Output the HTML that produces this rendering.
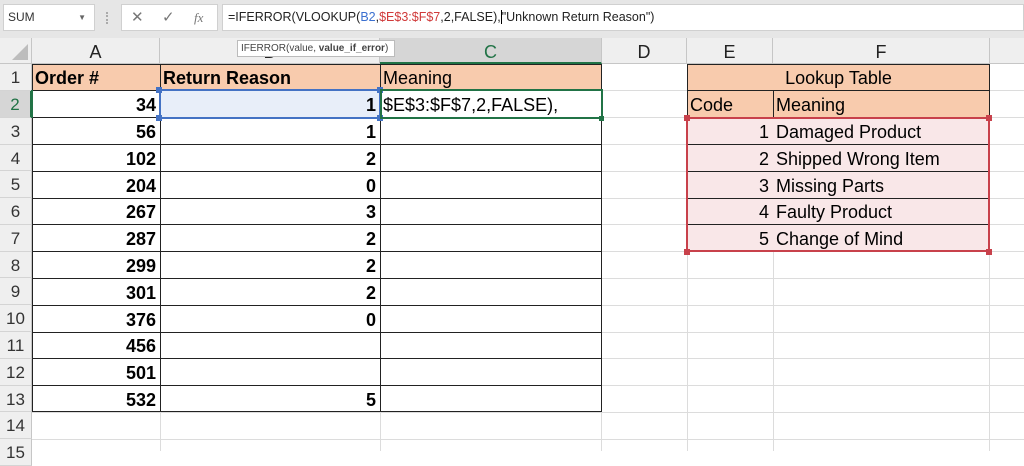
<!DOCTYPE html>
<html><head><meta charset="utf-8"><style>
*{margin:0;padding:0;box-sizing:border-box}
body{width:1024px;height:451px;overflow:hidden;background:#fff;position:relative;font-family:"Liberation Sans",sans-serif}
.a{position:absolute}
.c{position:absolute;font-size:18px;line-height:28px;white-space:nowrap;overflow:hidden;color:#000}
.r{text-align:right;padding-right:4px}
.l{padding-left:3px}
.b{font-weight:bold}
.rh{position:absolute;left:0;width:32px;text-align:center;font-size:17px;color:#333;background:#efefef;border-bottom:1px solid #d4d4d4;border-right:1px solid #c6c6c6;line-height:27px}
.ch{position:absolute;top:38px;height:26px;text-align:center;font-size:18px;line-height:28px;color:#222;background:#efefef;border-right:1px solid #c6c6c6;border-bottom:1px solid #c6c6c6}
.gh{position:absolute;left:32px;right:0;height:1px;background:#dcdcdc}
.gv{position:absolute;top:64px;bottom:0;width:1px;background:#dcdcdc}
</style></head><body>
<div class="a" style="left:0;top:0;width:1024px;height:38px;background:#e6e6e6"></div>
<div class="a" style="left:3px;top:4px;width:92px;height:27px;background:#fff;border:1px solid #d0d0d0;font-size:12px;line-height:25px;padding-left:4px;color:#333">SUM<span style="position:absolute;right:8px;top:0;font-size:8px;color:#666">▼</span></div>
<div class="a" style="left:106px;top:12px;width:2px;height:12px;border-left:2px dotted #aaa"></div>
<div class="a" style="left:121px;top:4px;width:97px;height:27px;background:#fff;border:1px solid #d0d0d0;color:#777;font-size:15px;line-height:25px">
<span class="a" style="left:9px">✕</span><span class="a" style="left:40px">✓</span><span class="a" style="left:72px;font-family:'Liberation Serif',serif;font-style:italic;font-size:13px">fx</span></div>
<div class="a" style="left:222px;top:4px;width:802px;height:27px;background:#fff;border:1px solid #d0d0d0;font-size:12.5px;line-height:25px;padding-left:5px;color:#222">=IFERROR(VLOOKUP(<span style="color:#3a6fd0">B2</span>,<span style="color:#d03a3a">$E$3:$F$7</span>,2,FALSE),<span style="border-left:1px solid #000"></span>"Unknown Return Reason")</div>
<div class="a" style="left:0;top:38px;width:32px;height:26px;background:#efefef;border-right:1px solid #c6c6c6;border-bottom:1px solid #c6c6c6"></div>
<div class="a" style="left:12px;top:44px;width:0;height:0;border-left:16px solid transparent;border-bottom:16px solid #bdbdbd"></div>
<div class="ch" style="left:32px;width:128px">A</div>
<div class="ch" style="left:160px;width:220px">B</div>
<div class="ch" style="left:380px;width:222px;background:#d6d6d6;color:#217346;border-bottom:2px solid #217346">C</div>
<div class="ch" style="left:602px;width:85px">D</div>
<div class="ch" style="left:687px;width:86px">E</div>
<div class="ch" style="left:773px;width:217px">F</div>
<div class="ch" style="left:990px;width:40px"></div>
<div class="a" style="left:237px;top:40px;width:158px;height:17px;background:#fff;border:1px solid #bbb;font-size:10px;line-height:15px;padding-left:3px;color:#444;white-space:nowrap">IFERROR(value, <b>value_if_error</b>)</div>
<div class="gv" style="left:160px"></div><div class="gv" style="left:380px"></div><div class="gv" style="left:601px"></div><div class="gv" style="left:687px"></div><div class="gv" style="left:773px"></div><div class="gv" style="left:989px"></div>
<div class="gh" style="top:90px"></div><div class="gh" style="top:117px"></div><div class="gh" style="top:144px"></div><div class="gh" style="top:171px"></div><div class="gh" style="top:198px"></div><div class="gh" style="top:224px"></div><div class="gh" style="top:251px"></div><div class="gh" style="top:278px"></div><div class="gh" style="top:305px"></div><div class="gh" style="top:332px"></div><div class="gh" style="top:358px"></div><div class="gh" style="top:385px"></div><div class="gh" style="top:412px"></div><div class="gh" style="top:439px"></div>
<div class="rh" style="top:64px;height:27px">1</div>
<div class="rh" style="top:91px;height:27px;background:#d6d6d6;color:#217346;border-right:2px solid #217346">2</div>
<div class="rh" style="top:118px;height:27px">3</div>
<div class="rh" style="top:145px;height:26px">4</div>
<div class="rh" style="top:171px;height:27px">5</div>
<div class="rh" style="top:198px;height:27px">6</div>
<div class="rh" style="top:225px;height:27px">7</div>
<div class="rh" style="top:252px;height:26px">8</div>
<div class="rh" style="top:278px;height:27px">9</div>
<div class="rh" style="top:305px;height:27px">10</div>
<div class="rh" style="top:332px;height:27px">11</div>
<div class="rh" style="top:359px;height:27px">12</div>
<div class="rh" style="top:386px;height:26px">13</div>
<div class="rh" style="top:412px;height:27px">14</div>
<div class="rh" style="top:439px;height:27px">15</div>
<div class="a" style="left:32px;top:64px;width:570px;height:26px;background:#f8cbad"></div>
<div class="a" style="left:161px;top:91px;width:219px;height:26px;background:#e8eef9"></div>
<div class="a" style="left:32px;top:64px;width:570px;height:348px;border:1px solid #222"></div>
<div class="a" style="left:160px;top:64px;width:1px;height:348px;background:#222"></div>
<div class="a" style="left:380px;top:64px;width:1px;height:348px;background:#222"></div>
<div class="a" style="left:32px;top:117px;width:570px;height:1px;background:#222"></div>
<div class="a" style="left:32px;top:144px;width:570px;height:1px;background:#222"></div>
<div class="a" style="left:32px;top:171px;width:570px;height:1px;background:#222"></div>
<div class="a" style="left:32px;top:198px;width:570px;height:1px;background:#222"></div>
<div class="a" style="left:32px;top:224px;width:570px;height:1px;background:#222"></div>
<div class="a" style="left:32px;top:251px;width:570px;height:1px;background:#222"></div>
<div class="a" style="left:32px;top:278px;width:570px;height:1px;background:#222"></div>
<div class="a" style="left:32px;top:305px;width:570px;height:1px;background:#222"></div>
<div class="a" style="left:32px;top:332px;width:570px;height:1px;background:#222"></div>
<div class="a" style="left:32px;top:358px;width:570px;height:1px;background:#222"></div>
<div class="a" style="left:32px;top:385px;width:570px;height:1px;background:#222"></div>
<div class="a" style="left:32px;top:90px;width:570px;height:1px;background:#222"></div>
<div class="c b l" style="left:32px;top:64px;width:128px">Order #</div>
<div class="c b l" style="left:160px;top:64px;width:220px">Return Reason</div>
<div class="c l" style="left:380px;top:64px;width:222px">Meaning</div>
<div class="c b r" style="left:32px;top:91px;width:128px">34</div>
<div class="c b r" style="left:32px;top:118px;width:128px">56</div>
<div class="c b r" style="left:32px;top:145px;width:128px">102</div>
<div class="c b r" style="left:32px;top:172px;width:128px">204</div>
<div class="c b r" style="left:32px;top:198px;width:128px">267</div>
<div class="c b r" style="left:32px;top:225px;width:128px">287</div>
<div class="c b r" style="left:32px;top:252px;width:128px">299</div>
<div class="c b r" style="left:32px;top:279px;width:128px">301</div>
<div class="c b r" style="left:32px;top:306px;width:128px">376</div>
<div class="c b r" style="left:32px;top:332px;width:128px">456</div>
<div class="c b r" style="left:32px;top:359px;width:128px">501</div>
<div class="c b r" style="left:32px;top:386px;width:128px">532</div>
<div class="c b r" style="left:160px;top:91px;width:220px">1</div>
<div class="c b r" style="left:160px;top:118px;width:220px">1</div>
<div class="c b r" style="left:160px;top:145px;width:220px">2</div>
<div class="c b r" style="left:160px;top:172px;width:220px">0</div>
<div class="c b r" style="left:160px;top:198px;width:220px">3</div>
<div class="c b r" style="left:160px;top:225px;width:220px">2</div>
<div class="c b r" style="left:160px;top:252px;width:220px">2</div>
<div class="c b r" style="left:160px;top:279px;width:220px">2</div>
<div class="c b r" style="left:160px;top:306px;width:220px">0</div>
<div class="c b r" style="left:160px;top:386px;width:220px">5</div>
<div class="c l" style="left:380px;top:91px;width:222px">$E$3:$F$7,2,FALSE),</div>
<div class="a" style="left:159px;top:89px;width:222px;height:30px;border:2px solid #4472c4"></div>
<div class="a" style="left:156px;top:87px;width:6px;height:6px;background:#4472c4"></div>
<div class="a" style="left:377px;top:87px;width:6px;height:6px;background:#4472c4"></div>
<div class="a" style="left:156px;top:115px;width:6px;height:6px;background:#4472c4"></div>
<div class="a" style="left:377px;top:115px;width:6px;height:6px;background:#4472c4"></div>
<div class="a" style="left:31px;top:90px;width:2px;height:28px;background:#217346"></div>
<div class="a" style="left:380px;top:89px;width:223px;height:30px;border:2px solid #217346"></div>
<div class="a" style="left:599px;top:116px;width:5px;height:5px;background:#217346"></div>
<div class="a" style="left:687px;top:64px;width:303px;height:54px;background:#f8cbad;border:1px solid #222"></div>
<div class="a" style="left:687px;top:90px;width:303px;height:1px;background:#222"></div>
<div class="a" style="left:773px;top:91px;width:1px;height:160px;background:#222"></div>
<div class="a" style="left:687px;top:118px;width:303px;height:134px;background:#f9e7e8"></div>
<div class="a" style="left:687px;top:144px;width:303px;height:1px;background:#222"></div>
<div class="a" style="left:687px;top:171px;width:303px;height:1px;background:#222"></div>
<div class="a" style="left:687px;top:198px;width:303px;height:1px;background:#222"></div>
<div class="a" style="left:687px;top:224px;width:303px;height:1px;background:#222"></div>
<div class="a" style="left:686px;top:117px;width:304px;height:135px;border:2px solid #c8414b"></div>
<div class="a" style="left:684px;top:115px;width:6px;height:6px;background:#c8414b"></div>
<div class="a" style="left:986px;top:115px;width:6px;height:6px;background:#c8414b"></div>
<div class="a" style="left:684px;top:249px;width:6px;height:6px;background:#c8414b"></div>
<div class="a" style="left:986px;top:249px;width:6px;height:6px;background:#c8414b"></div>
<div class="c" style="left:687px;top:64px;width:303px;text-align:center">Lookup Table</div>
<div class="c l" style="left:687px;top:91px;width:86px">Code</div>
<div class="c l" style="left:773px;top:91px;width:217px">Meaning</div>
<div class="c r" style="left:687px;top:118px;width:86px">1</div>
<div class="c r" style="left:687px;top:145px;width:86px">2</div>
<div class="c r" style="left:687px;top:172px;width:86px">3</div>
<div class="c r" style="left:687px;top:198px;width:86px">4</div>
<div class="c r" style="left:687px;top:225px;width:86px">5</div>
<div class="c l" style="left:773px;top:118px;width:217px">Damaged Product</div>
<div class="c l" style="left:773px;top:145px;width:217px">Shipped Wrong Item</div>
<div class="c l" style="left:773px;top:172px;width:217px">Missing Parts</div>
<div class="c l" style="left:773px;top:198px;width:217px">Faulty Product</div>
<div class="c l" style="left:773px;top:225px;width:217px">Change of Mind</div>
</body></html>
